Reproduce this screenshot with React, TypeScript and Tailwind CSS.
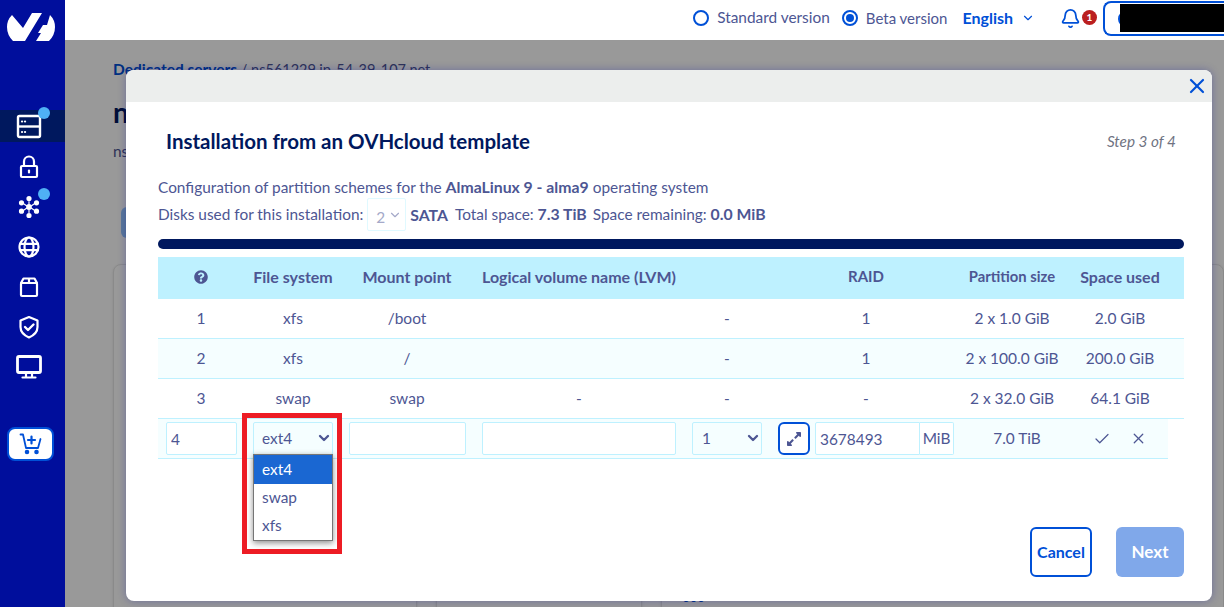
import { Bell, Check, ChevronDown, X } from "lucide-react";
import { FaExpandAlt, FaQuestionCircle } from "react-icons/fa";

const rows = [
  ["1", "xfs", "/boot", "", "-", "1", "2 x 1.0 GiB", "2.0 GiB"],
  ["2", "xfs", "/", "", "-", "1", "2 x 100.0 GiB", "200.0 GiB"],
  ["3", "swap", "swap", "-", "-", "-", "2 x 32.0 GiB", "64.1 GiB"],
];

const headers = ["", "File system", "Mount point", "Logical volume name (LVM)", "", "RAID", "Partition size", "Space used"];

const gridCols = "grid grid-cols-[86px_98px_130px_214px_82px_196px_96px_120px] pr-[4px]";

function Logo() {
  return (
    <svg width="65" height="45" viewBox="0 0 65 45">
      <path d="M12 15 L23 28 L32 13 L42 13 L25 41 L13 41 Q7 35 7 27 Q7 20 12 15Z" fill="white" />
      <path d="M50 15 Q55 20 55 27 Q55 35 49 41 L36 41 L41 33 L38 33 L43 25 L47 25Z" fill="white" />
    </svg>
  );
}

function NavIcon({ children, dot }: { children: React.ReactNode; dot?: boolean }) {
  return (
    <div className="relative h-10 w-full flex items-center justify-center pr-[7px] shrink-0">
      <svg width="26" height="26" viewBox="0 0 26 26" fill="none" stroke="white" strokeWidth="2.2" strokeLinejoin="round" strokeLinecap="round">
        {children}
      </svg>
      {dot && <span className="absolute left-[38px] top-[1px] w-3 h-3 rounded-full bg-[#4fb0f5]" />}
    </div>
  );
}

function Sidebar() {
  return (
    <div className="w-[65px] shrink-0 h-full bg-[#000e9c] flex flex-col">
      <div className="h-[110px] shrink-0">
        <Logo />
      </div>
      <div className="relative h-8 shrink-0 bg-[#00185e] flex items-center justify-center pr-[7px] mb-[5px]">
        <svg width="26" height="26" viewBox="0 0 26 26" fill="none" stroke="white" strokeWidth="2.4" strokeLinejoin="round">
          <rect x="2" y="3" width="22" height="21" rx="1.5" />
          <path d="M2 13.5 H24" />
          <path d="M6 8.5h.1M9 8.5h.1M6 19h.1M9 19h.1" strokeWidth="2.2" strokeLinecap="round" />
        </svg>
        <span className="absolute left-[38px] top-[-3px] w-3 h-3 rounded-full bg-[#4fb0f5]" />
      </div>
      <NavIcon>
        <rect x="5" y="12" width="16" height="11" rx="1" />
        <path d="M8 12 V7.500 a5 5 0 0 1 10 0 V12" />
        <path d="M13 16.500 v2" />
      </NavIcon>
      <NavIcon dot>
        <circle cx="13" cy="13" r="1.800" fill="white" />
        <path d="M13 7.500 V10 M13 16 V18.500 M8 10 L10.500 11.700 M18 10 L15.500 11.700 M8 16 L10.500 14.300 M18 16 L15.500 14.300" strokeWidth="1.200" />
        <circle cx="13" cy="4.500" r="1.500" fill="white" />
        <circle cx="13" cy="21.500" r="1.500" fill="white" />
        <circle cx="5.500" cy="8.800" r="1.500" fill="white" />
        <circle cx="20.500" cy="8.800" r="1.500" fill="white" />
        <circle cx="5.500" cy="17.200" r="1.500" fill="white" />
        <circle cx="20.500" cy="17.200" r="1.500" fill="white" />
      </NavIcon>
      <NavIcon>
        <circle cx="13" cy="13" r="9.500" />
        <ellipse cx="13" cy="13" rx="4.500" ry="9.500" />
        <path d="M4.200 9.800 H21.800 M4.200 16.200 H21.800" />
      </NavIcon>
      <NavIcon>
        <rect x="5" y="9" width="16" height="13" rx="1" />
        <path d="M5 9 L7.500 4.500 H18.500 L21 9 M13 4.500 V9" />
      </NavIcon>
      <NavIcon>
        <path d="M13 3 L21.500 6.500 V13 C21.500 18 17.500 21.500 13 23.500 C8.500 21.500 4.500 18 4.500 13 V6.500Z" />
        <path d="M9 13 L12 16 L17.500 10.500" strokeWidth="2.400" />
      </NavIcon>
      <NavIcon>
        <rect x="1.500" y="2.500" width="23" height="16" rx="1.500" strokeWidth="2.800" />
        <path d="M10 19.500 V23 M16 19.500 V23 M6.500 23.500 H19.500" strokeWidth="2.200" />
      </NavIcon>
      <div className="mt-[40px] ml-[7px] w-[47px] h-[34px] rounded-lg bg-white border-2 border-[#0050d7] flex items-center justify-center shrink-0">
        <svg width="24" height="24" viewBox="0 0 24 24" fill="none" stroke="#0050d7" strokeWidth="1.800" strokeLinecap="round" strokeLinejoin="round">
          <path d="M1.500 2.500 H4 L7 16 H19 L21.500 7" />
          <path d="M12.500 4.500 V11.500 M9 8 H16" strokeWidth="2.200" />
          <circle cx="8" cy="20" r="1.400" fill="#0050d7" />
          <circle cx="17.500" cy="20" r="1.400" fill="#0050d7" />
        </svg>
      </div>
    </div>
  );
}

function Radio({ checked, label, size }: { checked?: boolean; label: string; size: string }) {
  return (
    <div className="flex items-center gap-[8px]">
      <span className="w-4 h-4 rounded-full border-2 border-[#0050d7] flex items-center justify-center">
        {checked && <span className="w-2 h-2 rounded-full bg-[#0050d7]" />}
      </span>
      <span className={`text-[#4d5693] ${size}`}>{label}</span>
    </div>
  );
}

function Header() {
  return (
    <div className="h-10 shrink-0 bg-white flex items-center justify-end pb-[4px]">
      <Radio label="Standard version" size="text-[15.4px]" />
      <div className="ml-[12px]">
        <Radio checked label="Beta version" size="text-[15px]" />
      </div>
      <span className="ml-[15px] text-[16px] font-bold text-[#0050d7]">English</span>
      <ChevronDown size={14} className="ml-[8px] text-[#0050d7]" />
      <div className="relative ml-[25px] w-[43px] h-[24px] flex items-center">
        <Bell size={21} className="text-[#0050d7]" />
        <span className="absolute left-[22px] top-[4px] w-[15px] h-[15px] rounded-full bg-[#bb1f1f] text-white text-[10px] font-bold flex items-center justify-center">1</span>
      </div>
      <div className="w-[121px] h-[35px] shrink-0 border-2 border-r-0 border-[#0050d7] rounded-l-[8px] bg-white flex items-center pl-[15px] relative">
        <span className="absolute left-[13px] top-[7px] w-[18px] h-[18px] rounded-full border-2 border-[#0050d7]" />
        <span className="relative w-[104px] h-[28px] bg-black" />
      </div>
    </div>
  );
}

function BackgroundPage() {
  return (
    <div className="h-full pl-[48px] pt-[20px] bg-white overflow-hidden">
      <div className="text-[14.5px] leading-[18px] text-[#4d5693]">
        <span className="font-bold text-[15.5px] text-[#0050d7]">Dedicated servers</span> / ns561229.ip-54-39-107.net
      </div>
      <div className="mt-[15px] text-[28px] leading-[36px] font-bold text-[#00185e]">ns561229.ip-54-39-107.net</div>
      <div className="mt-[10px] text-[15.4px] leading-[22px] text-[#4d5693]">ns561229.ip-54-39-107.net</div>
      <div className="mt-[45px] ml-[8px] w-[80px] h-[31px] rounded-md bg-[#98c8ff]" />
      <div className="mt-[26px] flex gap-[19px] h-[400px]">
        <div className="w-[325px] rounded-lg border border-[#e6e6e6] bg-white shadow-sm" />
        <div className="w-[220px] rounded-lg border border-[#e6e6e6] bg-white shadow-sm" />
        <div className="w-[600px] rounded-lg border border-[#e6e6e6] bg-white shadow-sm pl-[20px] pt-[325px] text-[13px] leading-[14px] font-bold text-[#0050d7]">000</div>
      </div>
    </div>
  );
}

function Dropdown() {
  return (
    <div className="absolute left-[-1px] top-[31px] w-[80px] h-[87px] bg-white border border-[#767676] shadow-[0_2px_6px_rgba(0,0,0,0.45)] z-10 text-[15.4px] text-[#4d5693]">
      <div className="h-[29px] px-[8px] flex items-center bg-[#1a67d2] text-white">ext4</div>
      <div className="h-[28px] px-[8px] flex items-center">swap</div>
      <div className="h-[28px] px-[8px] flex items-center">xfs</div>
    </div>
  );
}

function EditRow() {
  const box = "h-[33px] border border-[#bef1ff] rounded-[2px] text-[15.4px] text-[#4d5693] outline-none";
  return (
    <div className="w-[1010px] h-10 bg-[#f5feff] border-b border-[#bef1ff] flex items-center pl-[8px]">
      <input readOnly value="4" className={`${box} w-[71px] px-[4px] bg-white`} />
      <div className={`${box} relative ml-[16px] w-[80px] pl-[8px] flex items-center justify-between`}>
        <span className="pt-[1px]">ext4</span>
        <ChevronDown size={16} strokeWidth={3.5} className="mb-[2px]" />
        <Dropdown />
      </div>
      <input readOnly className={`${box} ml-[16px] w-[117px] bg-white`} />
      <input readOnly className={`${box} ml-[16px] w-[194px] bg-white`} />
      <div className={`${box} ml-[16px] w-[70px] pl-[9px] flex items-center justify-between`}>
        <span className="pt-[1px]">1</span>
        <ChevronDown size={16} strokeWidth={3.5} className="mb-[2px]" />
      </div>
      <button className="ml-[16px] w-[32px] h-[33px] border-2 border-[#0050d7] rounded-md bg-white flex items-center justify-center text-[#4d5693]">
        <FaExpandAlt size={16} />
      </button>
      <div className="ml-[5px] flex">
        <input readOnly value="3678493" className={`${box} w-[105px] px-[4px] bg-white rounded-r-none`} />
        <span className={`${box} w-[34px] border-l-0 flex items-center justify-center bg-white rounded-l-none`}>MiB</span>
      </div>
      <span className="w-[126px] text-center text-[15.4px] text-[#4d5693]">7.0 TiB</span>
      <div className="ml-[4px] w-[36px] flex justify-center text-[#4d5693]">
        <Check size={18} strokeWidth={1.6} />
      </div>
      <div className="w-[36px] flex justify-center text-[#4d5693]">
        <X size={17} strokeWidth={1.8} />
      </div>
    </div>
  );
}

function Modal() {
  return (
    <div className="absolute left-[61px] top-[30px] w-[1086px] h-[531px] rounded-lg bg-white shadow-[0_0_8px_rgba(0,14,156,0.3)] overflow-hidden text-[#4d5693]">
      <div className="h-8 bg-[#eceeed] flex items-center justify-end pr-[3px]">
        <X size={24} strokeWidth={2.2} className="text-[#0050d7]" />
      </div>
      <div className="pl-[32px] pr-[28px]">
        <div className="mt-[23px] h-8 pl-[8px] pr-[8px] flex items-center justify-between">
          <h2 className="text-[20.5px] font-bold text-[#00185e]">Installation from an OVHcloud template</h2>
          <span className="text-[15.3px] italic text-[#6f7382]">Step 3 of 4</span>
        </div>
        <p className="mt-[19px] text-[15.4px] leading-[22px]">
          Configuration of partition schemes for the <b className="text-[15.8px]">AlmaLinux 9 - alma9</b> operating system
        </p>
        <div className="h-[33px] flex items-center text-[15.4px]">
          Disks used for this installation:
          <span className="ml-[4px] shrink-0 w-[39px] h-[33px] border border-[#e0f9ff] rounded-[2px] flex items-center justify-between pl-[8px] pr-[3px] text-[#a5a9c9]">
            <span className="pt-[6px]">2</span>
            <ChevronDown size={14} />
          </span>
          <b className="ml-[4px] text-[15.8px]">SATA</b>
          <span className="ml-[7px]">Total space: <b className="text-[15.8px]">7.3 TiB</b></span>
          <span className="ml-[6px]">Space remaining: <b className="text-[15.8px]">0.0 MiB</b></span>
        </div>
        <div className="mt-[8px] h-[10px] rounded-full bg-[#00185e]" />
        <div className={`${gridCols} mt-[8px] h-[42px] bg-[#bef1ff] items-center text-center text-[16px] font-bold pb-[3px]`}>
          {headers.map((h, i) =>
            i === 0 ? (
              <span key={i} className="flex justify-center">
                <FaQuestionCircle size={14} />
              </span>
            ) : (
              <span key={i} className={i === 6 ? "text-[14.8px]" : i === 5 ? "text-[15px]" : ""}>{h}</span>
            )
          )}
        </div>
        {rows.map((r, i) => (
          <div key={i} className={`${gridCols} h-10 items-center text-center text-[15.5px] border-b border-[#bef1ff] ${i === 1 ? "bg-[#f5feff]" : "bg-white"}`}>
            {r.map((c, j) => (
              <span key={j}>{c}</span>
            ))}
          </div>
        ))}
        <EditRow />
        <div className="mt-[68px] flex justify-end gap-[24px]">
          <button className="w-[62px] h-[50px] rounded-md border-2 border-[#0050d7] bg-white text-[16px] font-bold text-[#0050d7]">Cancel</button>
          <button className="w-[68px] h-[50px] rounded-md bg-[#80a8ea] text-[17px] font-bold text-white">Next</button>
        </div>
      </div>
      <div className="absolute left-[116px] top-[343px] w-[100px] h-[141px] border-[5px] border-[#ed1c24] z-20" />
    </div>
  );
}

export default function App() {
  return (
    <div className="w-screen h-screen flex overflow-hidden font-[Lato,sans-serif]">
      <Sidebar />
      <div className="flex-1 min-w-0 flex flex-col">
        <Header />
        <div className="relative flex-1 min-h-0">
          <BackgroundPage />
          <div className="absolute inset-0 bg-black/40" />
          <Modal />
        </div>
      </div>
    </div>
  );
}
